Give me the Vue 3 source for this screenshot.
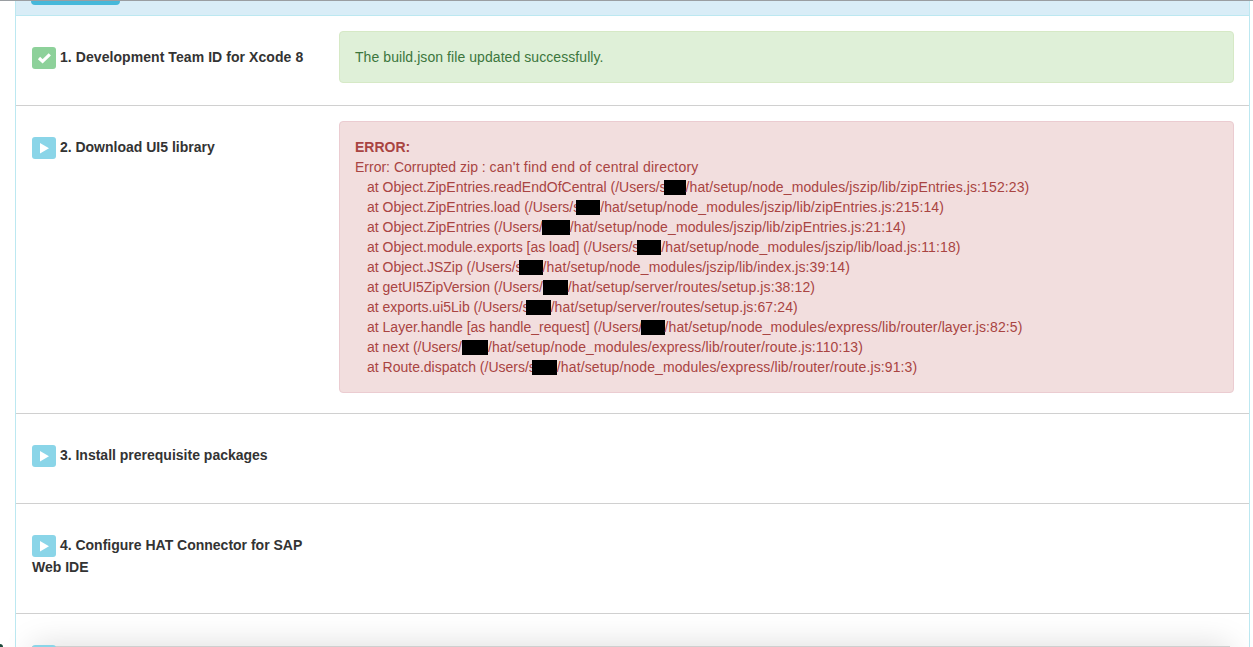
<script setup>
const trace = [
  { a: 'at Object.ZipEntries.readEndOfCentral (/Users/s', ml: -3, w: 22, b: '/hat/setup/node_modules/jszip/lib/zipEntries.js:152:23)' },
  { a: 'at Object.ZipEntries.load (/Users/s', ml: -4, w: 24, b: '/hat/setup/node_modules/jszip/lib/zipEntries.js:215:14)' },
  { a: 'at Object.ZipEntries (/Users/', ml: -1, w: 28, b: '/hat/setup/node_modules/jszip/lib/zipEntries.js:21:14)' },
  { a: 'at Object.module.exports [as load] (/Users/s', ml: -2, w: 24, b: '/hat/setup/node_modules/jszip/lib/load.js:11:18)' },
  { a: 'at Object.JSZip (/Users/s', ml: -4, w: 24, b: '/hat/setup/node_modules/jszip/lib/index.js:39:14)' },
  { a: 'at getUI5ZipVersion (/Users/', ml: 0, w: 25, b: '/hat/setup/server/routes/setup.js:38:12)' },
  { a: 'at exports.ui5Lib (/Users/s', ml: -4, w: 25, b: '/hat/setup/server/routes/setup.js:67:24)' },
  { a: 'at Layer.handle [as handle_request] (/Users/', ml: -2, w: 24, b: '/hat/setup/node_modules/express/lib/router/layer.js:82:5)' },
  { a: 'at next (/Users/', ml: 0, w: 26, b: '/hat/setup/node_modules/express/lib/router/route.js:110:13)' },
  { a: 'at Route.dispatch (/Users/s', ml: -4, w: 25, b: '/hat/setup/node_modules/express/lib/router/route.js:91:3)' }
]
</script>

<template>
  <div class="page">
    <div class="panel">
      <div class="heading"><span class="tab"></span></div>

      <section class="row">
        <div class="title spaced">
          <span class="badge done">
            <svg viewBox="0 0 24 22" width="24" height="22"><path d="M7 11l3.600 3.400 7.200-7" fill="none" stroke="#fff" stroke-width="3.200" /></svg>
          </span>
          1. Development Team ID for Xcode 8
        </div>
        <div class="result">
          <div class="alert success spaced">The build.json file updated successfully.</div>
        </div>
      </section>

      <section class="row">
        <div class="title">
          <span class="badge">
            <svg viewBox="0 0 24 22" width="24" height="22"><path d="M8 6v10.500l9-5.250z" fill="#fff" /></svg>
          </span>
          2. Download UI5 library
        </div>
        <div class="result">
          <div class="alert danger">
            <strong>ERROR:</strong>
            <div>Error: Corrupted zip : <span class="wider">can't find end of central directory</span></div>
            <div v-for="line in trace" :key="line.a" class="trace">{{ line.a }}<span class="mask" :style="{ width: line.w + 'px', marginLeft: line.ml + 'px' }"></span><span class="wide">{{ line.b }}</span></div>
          </div>
        </div>
      </section>

      <section class="row">
        <div class="title">
          <span class="badge">
            <svg viewBox="0 0 24 22" width="24" height="22"><path d="M8 6v10.500l9-5.250z" fill="#fff" /></svg>
          </span>
          3. Install prerequisite packages
        </div>
      </section>

      <section class="row">
        <div class="title">
          <span class="badge">
            <svg viewBox="0 0 24 22" width="24" height="22"><path d="M8 6v10.500l9-5.250z" fill="#fff" /></svg>
          </span>
          4. Configure HAT Connector for SAP Web IDE
        </div>
      </section>

      <section class="row last">
        <div class="title">
          <span class="badge">
            <svg viewBox="0 0 24 22" width="24" height="22"><path d="M8 6v10.500l9-5.250z" fill="#fff" /></svg>
          </span>
        </div>
      </section>
    </div>
    <div class="dock"></div>
    <div class="corner"></div>
  </div>
</template>

<style>
html, body { margin: 0; background: #fff; overflow: hidden; }
</style>

<style scoped>
.page {
  position: relative;
  height: 647px;
  overflow: hidden;
  background: #fff;
  border-top: 1px solid #9a9ea2;
  box-sizing: border-box;
  padding: 0 3px 0 15px;
  font-family: "Liberation Sans", Arial, sans-serif;
  font-size: 14px;
  line-height: 20px;
  color: #333;
}
.panel {
  border-left: 1px solid #bce8f1;
  border-right: 1px solid #bce8f1;
}
.heading {
  height: 14px;
  background: #d9edf7;
  border-bottom: 1px solid #bce8f1;
  padding-left: 15px;
}
.tab {
  display: block;
  width: 89px;
  height: 4px;
  background: #46b8da;
  border-radius: 0 0 4px 4px;
}
.row {
  display: flex;
  gap: 15px;
  padding: 15px;
  border-bottom: 1px solid #d0d0d0;
}
.title {
  width: 293px;
  flex: none;
  padding: 16px 0 21px 1px;
  box-sizing: border-box;
  font-weight: 700;
}
.badge {
  display: inline-block;
  width: 24px;
  height: 22px;
  vertical-align: top;
  border-radius: 3px;
  background: #8ad5e8;
}
.badge svg { display: block; }
.badge.done { background: #8dd19a; }
.result { flex: 1; min-width: 0; }
.alert {
  border: 1px solid;
  border-radius: 4px;
  padding: 15px;
  margin-bottom: 5px;
}
.success {
  background: #dff0d8;
  border-color: #d6e9c6;
  color: #3c763d;
}
.danger {
  background: #f2dede;
  border-color: #ebccd1;
  color: #a94442;
}
.spaced { letter-spacing: .07px; }
.wide { letter-spacing: .11px; }
.wider { letter-spacing: .2px; }
.trace { padding-left: 12px; white-space: nowrap; }
.mask {
  display: inline-block;
  height: 15px;
  background: #000;
  vertical-align: -3px;
}
.last { border-bottom: 0; }
.last .badge {
  position: relative;
  z-index: 2;
}
.dock {
  position: absolute;
  z-index: 1;
  left: 32px;
  right: 23px;
  top: 645px;
  height: 30px;
  background: #cfcfcf;
  box-shadow: 0 0 32px rgba(0, 0, 0, .15);
}
.corner {
  position: absolute;
  left: 0;
  bottom: 0;
  width: 3px;
  height: 3px;
  background: #1d4a3c;
  border-top-right-radius: 3px;
}
</style>
